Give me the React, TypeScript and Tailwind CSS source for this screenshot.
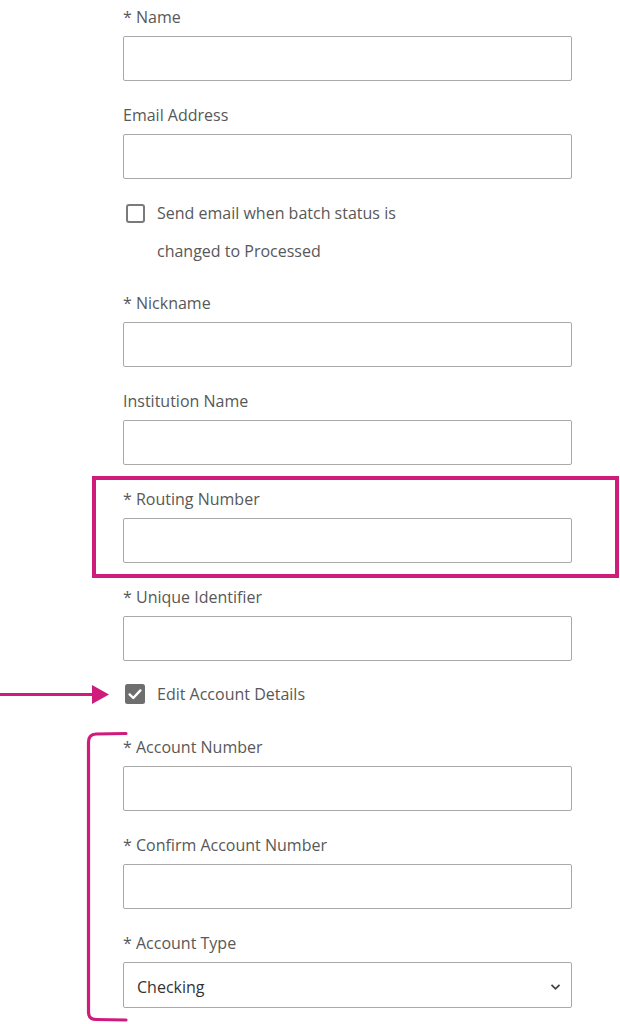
import { type JSX } from "react"

const PINK = "#cf1b7b"

function Field({ label, className = "" }: { label: string; className?: string }): JSX.Element {
  return (
    <div className={className}>
      <div className="h-[24px] text-[16px] leading-[24px] text-[#585858]">{label}</div>
      <input
        type="text"
        className="mt-[7px] block h-[45px] w-full rounded-[2px] border border-[#a9a9a9] bg-white px-3 text-[16px] text-[#333] outline-none"
      />
    </div>
  )
}

function CheckIcon(): JSX.Element {
  return (
    <svg viewBox="0 0 20 20" className="h-[20px] w-[20px]">
      <rect x="0" y="0" width="20" height="20" rx="2.5" fill="#6e6e6e" />
      <path d="M4.6 10.4 L8.3 14 L15.4 6.4" fill="none" stroke="#fff" strokeWidth="2.4" strokeLinecap="round" strokeLinejoin="round" />
    </svg>
  )
}

export default function App(): JSX.Element {
  return (
    <div className="relative h-[1024px] w-[620px] overflow-hidden bg-white font-['Open_Sans',sans-serif]">
      {/* annotation: arrow */}
      <svg className="absolute left-0 top-[683px]" width="112" height="22" viewBox="0 0 112 22">
        <line x1="0" y1="11.5" x2="96" y2="11.5" stroke={PINK} strokeWidth="3" />
        <polygon points="92,2 109,11.5 92,21" fill={PINK} />
      </svg>
      {/* annotation: bracket */}
      <svg className="absolute left-[84px] top-[730px]" width="46" height="294" viewBox="0 0 46 294">
        <path
          d="M42 3.5 L12 4 Q4.5 4.5 4.5 12 L4.5 282 Q4.5 289.5 12 289.5 L42 290"
          fill="none"
          stroke={PINK}
          strokeWidth="3.2"
          strokeLinecap="round"
        />
      </svg>

      <div className="ml-[123px] w-[449px] pt-[5px]">
        <Field label="* Name" />
        <Field label="Email Address" className="mt-[22px]" />

        <div className="mt-[15px] flex">
          <div className="ml-[3px] flex h-[38px] items-center">
            <span className="block h-[19px] w-[19px] rounded-[3px] border-2 border-[#7a7a7a] bg-white" />
          </div>
          <div className="ml-[12px] w-[270px] text-[16px] leading-[38px] text-[#585858]">
            Send email when batch status is changed to Processed
          </div>
        </div>

        <Field label="* Nickname" className="mt-[21px]" />
        <Field label="Institution Name" className="mt-[22px]" />

        <div className="-ml-[31px] -mr-[47px] mt-[11px] border-4 border-[#cf1b7b] pb-[11px] pl-[27px] pr-[43px] pt-[7px]">
          <Field label="* Routing Number" />
        </div>

        <Field label="* Unique Identifier" className="mt-[7px]" />

        <div className="mt-[21px] flex h-[24px] items-center">
          <div className="ml-[2px]">
            <CheckIcon />
          </div>
          <span className="ml-[12px] text-[16px] leading-[24px] text-[#585858]">Edit Account Details</span>
        </div>

        <Field label="* Account Number" className="mt-[29px]" />
        <Field label="* Confirm Account Number" className="mt-[22px]" />

        <div className="mt-[22px]">
          <div className="h-[24px] text-[16px] leading-[24px] text-[#585858]">* Account Type</div>
          <div className="relative mt-[7px] flex h-[46px] items-center rounded-[2px] border border-[#a9a9a9] bg-white pl-[13px] pr-3 pt-[3px]">
            <span className="text-[16px] text-[#333]">Checking</span>
            <svg className="absolute right-[10px] top-[20px]" width="11" height="8" viewBox="0 0 11 8">
              <path d="M1.5 1.8 L5.5 5.8 L9.5 1.8" fill="none" stroke="#444" strokeWidth="1.8" />
            </svg>
          </div>
        </div>
      </div>
    </div>
  )
}
